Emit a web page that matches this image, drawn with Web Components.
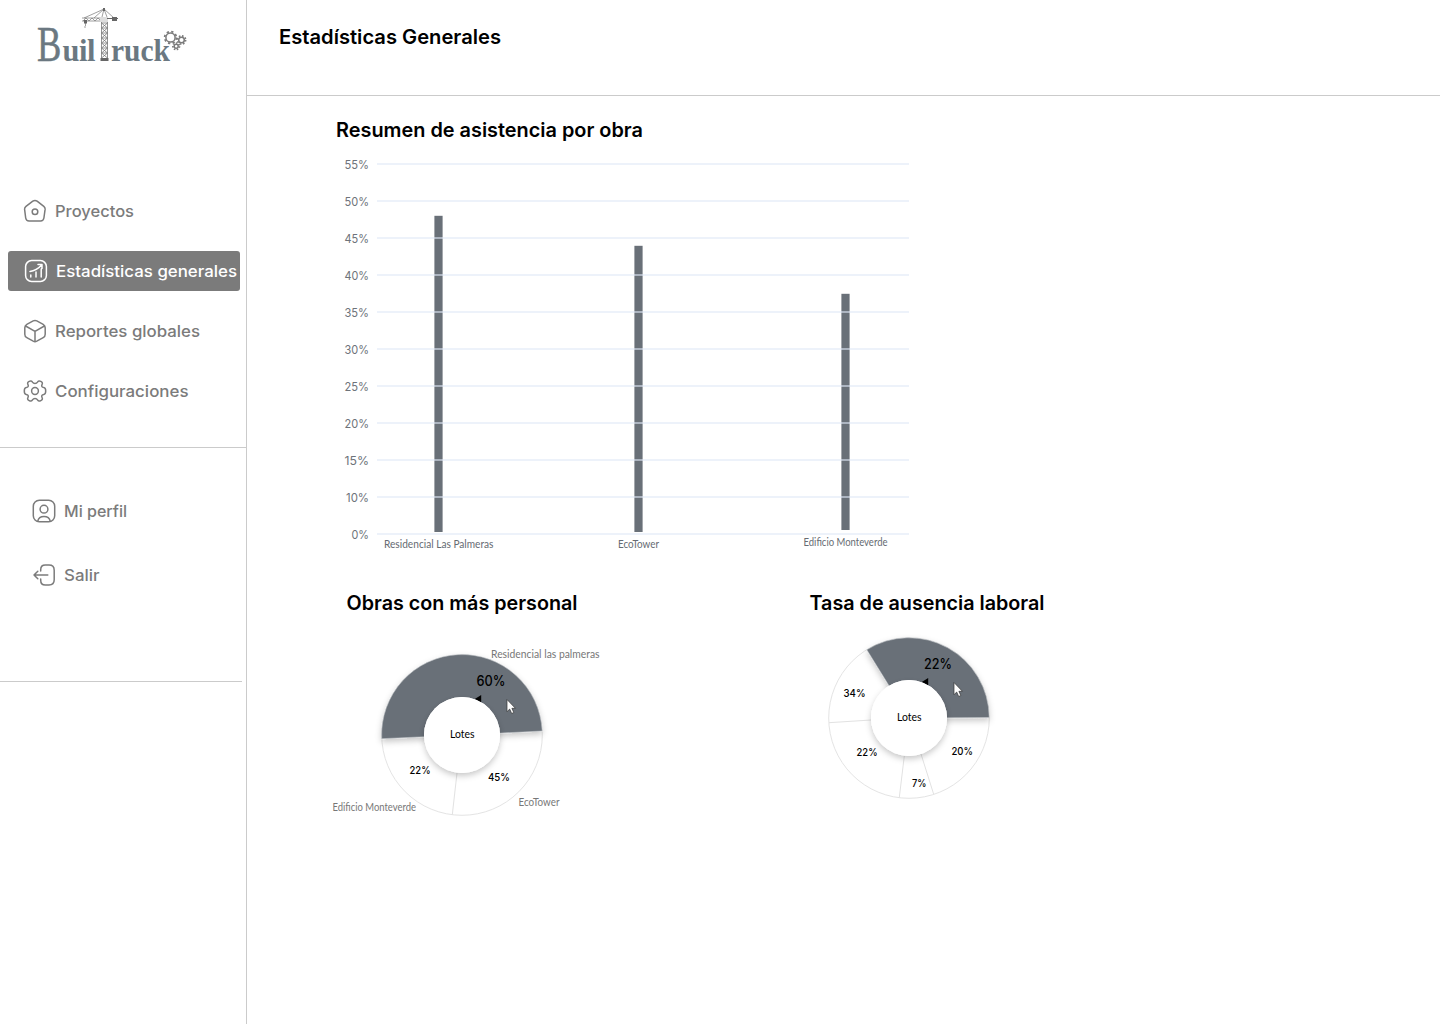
<!DOCTYPE html>
<html lang="es">
<head>
<meta charset="utf-8">
<title>BuilTruck</title>
<style>
html,body{margin:0;height:100%;background:#fff;overflow:hidden;font-family:Inter,"Liberation Sans",sans-serif}
</style>
</head>
<body>
<app-shell>
  <side-bar slot="side">
    <brand-logo></brand-logo>
    <nav-item icon="home" width="79">Proyectos</nav-item>
    <nav-item icon="stats" width="181" active>Estadísticas generales</nav-item>
    <nav-item icon="box" width="145">Reportes globales</nav-item>
    <nav-item icon="gear" width="133.5">Configuraciones</nav-item>
    <nav-item slot="account" icon="user" width="63">Mi perfil</nav-item>
    <nav-item slot="account" icon="exit" width="35.5">Salir</nav-item>
  </side-bar>
  <fit-label slot="title" width="222" size="20" weight="600">Estadísticas Generales</fit-label>
  <attendance-chart></attendance-chart>
  <staff-donut slot="charts"></staff-donut>
  <absence-donut slot="charts"></absence-donut>
</app-shell>
<script>
const define = (name, html) => customElements.define(name, class extends HTMLElement {
  connectedCallback() {
    if (this.shadowRoot) return;
    const t = document.createElement('template');
    t.innerHTML = typeof html === 'function' ? html(this) : html;
    this.attachShadow({mode: 'open'}).append(t.content.cloneNode(true));
  }
});

// Single-line label whose text is set to an exact width.
define('fit-label', el => {
  const w = el.getAttribute('width'), s = +el.getAttribute('size');
  return `<style>:host{display:block;height:24px}svg{display:block;overflow:visible}
    text{font-family:Inter,"Liberation Sans",sans-serif;font-size:${s}px;font-weight:${el.getAttribute('weight')};fill:currentColor}</style>
    <svg width="${w}" height="24"><text x="0" y="${12 + s * .36}" textLength="${w}" lengthAdjust="spacingAndGlyphs">${el.textContent}</text></svg>`;
});

define('app-shell', `<style>
  :host{display:flex;width:1440px;height:1024px;background:#fff;color:#000}
  aside{box-sizing:border-box;flex:0 0 247px;width:247px;min-width:0;border-right:1px solid #cbcbcb}
  main{flex:1;display:flex;flex-direction:column;min-width:0}
  header{box-sizing:border-box;height:96px;border-bottom:1px solid #cbcbcb;padding:25px 0 0 32px}
  section{padding:22px 0 0 80px}
  .row{display:flex;gap:193px;padding:31px 0 0 80px}
  </style><aside><slot name="side"></slot></aside>
  <main><header><slot name="title"></slot></header><section><slot></slot></section><div class="row"><slot name="charts"></slot></div></main>`);

define('side-bar', `<style>
  :host{display:block}
  nav{box-sizing:border-box;display:flex;flex-direction:column;gap:20px;padding:0 6px 36px 8px;height:447px}
  .account{gap:24px;padding:43px 6px 0 16px;height:233px}
  hr{border:0;height:1px;background:#cbcbcb;margin:0}
  .short{margin-right:4px}
  ::slotted(brand-logo){margin:0 0 95px -8px}
  </style><nav><slot></slot></nav><hr><nav class="account"><slot name="account"></slot></nav><hr class="short">`);

const icons = {
  home: '<path d="M9.8 2.2 3 7.4Q1.4 8.6 1.6 10.4L2.7 19Q3.2 22 6 22H17.6Q20.4 22 20.9 19L22.1 10.4Q22.3 8.6 20.8 7.4L14.1 2.2Q12 .8 9.8 2.2Z"/><circle cx="12" cy="12.8" r="2.8"/>',
  stats: '<rect x="1.6" y="1.6" width="20.8" height="20.8" rx="6"/><path d="M6.8 18v-2M12 18v-5M17.2 18V10M6 12.4c4.5-.5 8-2.5 11.7-6.5M14 5.5h4v4"/>',
  box: '<path d="M10.2 1.9 3.8 5.3Q1.8 6.4 1.8 8.8v6.4Q1.8 17.6 3.8 18.7l6.4 3.5q1.8.9 3.6 0l6.4-3.5q2-1.1 2-3.5V8.8q0-2.4-2-3.5L13.8 1.9Q12 1 10.2 1.9ZM2.6 7 12 12.3 21.4 7M12 12.3v10.2"/>',
  gear: '<circle cx="12" cy="12" r="3.4"/><path d="M9.5 3.2C8.7 1.7 7.5 1.7 6.2 2.4 4.6 3.3 4.200 4.200 5 5.600 5.800 7.300 5 8.400 3.200 8.600 1.700 8.800 1.300 10 1.300 12s.4 3.200 1.900 3.400C5 15.600 5.800 16.700 5 18.400c-.8 1.400-.4 2.300 1.200 3.200 1.300.7 2.500.7 3.300-.8 1.100-1.700 3.900-1.700 5 0 .8 1.500 2 1.500 3.300.8 1.600-.9 2-1.800 1.200-3.200-.8-1.700 0-2.800 1.800-3 1.500-.2 1.900-1.400 1.900-3.400s-.4-3.200-1.900-3.400C19 8.400 18.200 7.300 19 5.600c.8-1.400.4-2.300-1.200-3.200-1.300-.7-2.500-.7-3.300.8-1.100 1.700-3.900 1.700-5 0Z"/>',
  user: '<rect x="1.3" y="1.3" width="21.4" height="21.4" rx="6"/><circle cx="12" cy="10.2" r="3.9"/><path d="M5.8 22c.6-3.1 3-4.6 6.2-4.6s5.6 1.5 6.2 4.6"/>',
  exit: '<path d="M8.7 8V6.7C8.7 3.4 10 2 13.3 2H17c3.8 0 5.2 1.5 5.2 5.2v9.6c0 3.7-1.4 5.2-5.2 5.2h-3.7c-3.3 0-4.6-1.4-4.6-4.7V16M15.8 12H2M5.8 8.2 2 12l3.8 3.8"/>'
};
define('nav-item', el => `<style>
  :host{display:flex;align-items:center;height:40px;flex:none;box-sizing:border-box;padding-left:15.4px;gap:8px;border-radius:3px;color:#7b7b7b}
  :host([active]){background:#7b7b7b;color:#fff;padding-left:16px}
  :host([slot]){padding-left:16px}
  svg{display:block;flex:none;fill:none;stroke:currentColor;stroke-width:1.5;stroke-linecap:round;stroke-linejoin:round}
  </style><svg width="24" height="24" viewBox="0 0 24 24">${icons[el.getAttribute('icon')]}</svg>
  <fit-label width="${el.getAttribute('width')}" size="16" weight="500">${el.textContent}</fit-label>`);

const teeth = (x, y, r, n) => `<circle cx="${x}" cy="${y}" r="${r}" stroke-width="1.5"/><circle cx="${x}" cy="${y}" r="${r + 1.3}" stroke-width="1.7" stroke-dasharray="${Math.PI * (r + 1.3) / n} ${Math.PI * (r + 1.3) / n}"/>`;
define('brand-logo', () => {
  let lattice = 'M101.5 22V59M107.5 22V59';
  for (let y = 23; y < 58; y += 5) lattice += `M101.5 ${y}l6 5M107.5 ${y}l-6 5M101.5 ${y}h6`;
  return `<style>:host{display:block;height:76px;flex:none}svg{display:block;overflow:visible}
  text{font-family:"Liberation Serif",serif;fill:#6b7881}</style>
  <svg width="246" height="76">
    <text transform="translate(37 61) scale(.73 1)" font-size="50" stroke="#6b7881" stroke-width=".5">B</text>
    <text transform="translate(62.5 61) scale(.95 1)" font-size="32" font-weight="bold" textLength="34.7">uil</text>
    <text x="111" y="61" font-size="32" font-weight="bold" textLength="59" lengthAdjust="spacingAndGlyphs">ruck</text>
    <g fill="none" stroke="#777" stroke-width=".8">
      <path d="${lattice}"/>
      <path d="M82 18H101M82 21H101M83 21l3-3 3 3 3-3 3 3 3-3 3 3M104 9 84 18M104 9 114 18M104 9 94 18M102 17 104 9l3 8M85.5 21v5q-2 1 0 2" stroke-width=".7"/>
      <g stroke="#7b7b7b">${teeth(170.5, 37.5, 4.6, 8)}${teeth(181.5, 40, 2.8, 8)}${teeth(176.2, 46.3, 2, 7)}</g>
    </g>
    <path d="M100 17h8v5h-8z" fill="#ddd"/><path d="M107 18.5h11" stroke="#666"/><path d="M112 17h5v4h-5zM84 20h3v3.5h-3zM100.5 58h8v3h-8zM103 8h2v3h-2z" fill="#666"/>
  </svg>`;
});

const chartStyle = `:host{display:block;flex:none}svg{display:block;overflow:visible}
  text{font-family:Inter,"Liberation Sans",sans-serif}
  .h{font-size:20px;font-weight:600;fill:#000}.tick{font-size:12px;fill:#6e737a}
  .name{font-family:Lato,sans-serif;font-size:10.8px;fill:#666b72}.soft{fill:#777}
  .pct{font-size:11px;font-weight:500;fill:#000}.big{font-size:14px;font-weight:500;fill:#000}
  .mid{font-family:Lato,sans-serif;font-size:10.5px;fill:#000}`;
const txt = (cls, x, y, w, s) => `<text class="${cls}" x="${x}" y="${y}" textLength="${w}" lengthAdjust="spacingAndGlyphs">${s}</text>`;

define('attendance-chart', () => {
  const ticks = [55, 50, 45, 40, 35, 30, 25, 20, 15, 10, 0];
  return `<style>${chartStyle}</style><svg width="600" height="440" viewBox="327 118 600 440">
    ${txt('h', 336, 137, 307, 'Resumen de asistencia por obra')}
    <g fill="#697078"><rect x="434.4" y="215.8" width="8.2" height="316.2"/><rect x="634.4" y="245.8" width="8.2" height="286.2"/><rect x="841.4" y="293.8" width="8.2" height="236.2"/></g>
    ${ticks.map((t, i) => `<rect x="377" y="${163 + 37 * i}" width="532" height="2" fill="rgba(223,232,246,.57)"/>` +
      txt('tick', t ? (t === 10 ? 346 : 344.5) : 351.5, 169 + 37 * i, t ? (t === 10 ? 23 : 24.5) : 17.5, t + '%')).join('')}
    ${txt('name', 384, 548, 109.5, 'Residencial Las Palmeras')}
    ${txt('name', 618, 548, 41, 'EcoTower')}
    ${txt('name', 803.5, 546, 84, 'Edificio Monteverde')}
  </svg>`;
});

const shadow = `<defs><filter id="s" x="-20%" y="-20%" width="140%" height="150%"><feDropShadow dx="0" dy="3" stdDeviation="3" flood-color="#000" flood-opacity=".22"/></filter></defs>`;
// Donut body: outline, highlighted wedge, separators, hub, marker and pointer.
const donut = (cx, cy, wedge, seps) => `${shadow}
  <circle cx="${cx}" cy="${cy}" r="80.3" fill="none" stroke="#e4e4e4" stroke-width="1"/>
  <path d="${wedge}" fill="#697078" stroke="#c9ccd0" stroke-width=".5" filter="url(#s)"/>
  <path d="${seps}" stroke="#e2e2e2" stroke-width="1"/>
  <circle cx="${cx}" cy="${cy}" r="38" fill="#fff" filter="url(#s)"/>
  <path d="M${cx + 12.8} ${cy - 36}l6.400-4v7.200z" fill="#000"/>
  <circle cx="${cx}" cy="${cy}" r="38" fill="#fff"/>
  <path transform="translate(${cx + 45} ${cy - 35.5})" d="M0 0V12.2L2.7 9.6 4.7 14 6.8 13 4.9 8.8H8.4Z" fill="#fff" stroke="#333" stroke-width=".7"/>
  ${txt('mid', cx - 12, cy + 3.2, 24.5, 'Lotes')}`;

define('staff-donut', () => `<style>${chartStyle}</style><svg width="290" height="240" viewBox="327 589 290 240">
  ${txt('h', 346.5, 610, 231, 'Obras con más personal')}
  ${donut(462, 735, 'M381.7 738.7A80.3 80.3 0 0 1 542.2 731L462 735Z', 'M457 773L452.3 814.7')}
  ${txt('name soft', 491, 658, 108.5, 'Residencial las palmeras')}
  ${txt('big', 476.5, 686, 29, '60%')}
  ${txt('pct', 409.5, 773.5, 21, '22%')}${txt('pct', 488, 781, 22, '45%')}
  ${txt('name soft', 332.5, 811, 83.5, 'Edificio Monteverde')}${txt('name soft', 518.5, 806, 41, 'EcoTower')}
</svg>`);

define('absence-donut', () => `<style>${chartStyle}</style><svg width="260" height="240" viewBox="810 589 260 240">
  ${txt('h', 809.5, 610, 235, 'Tasa de ausencia laboral')}
  ${donut(909, 718, 'M866.8 649.7A80.3 80.3 0 0 1 989.2 717.5L909 718Z', 'M829 722.7L871 720M904.3 756L899.3 797.5M921 754L933.7 794.3')}
  ${txt('big', 924, 669, 28, '22%')}
  ${txt('pct', 843.5, 697.3, 22, '34%')}${txt('pct', 856.5, 756.3, 21, '22%')}
  ${txt('pct', 951.5, 755.3, 21.5, '20%')}${txt('pct', 912, 787, 14.5, '7%')}
</svg>`);
</script>
</body>
</html>
